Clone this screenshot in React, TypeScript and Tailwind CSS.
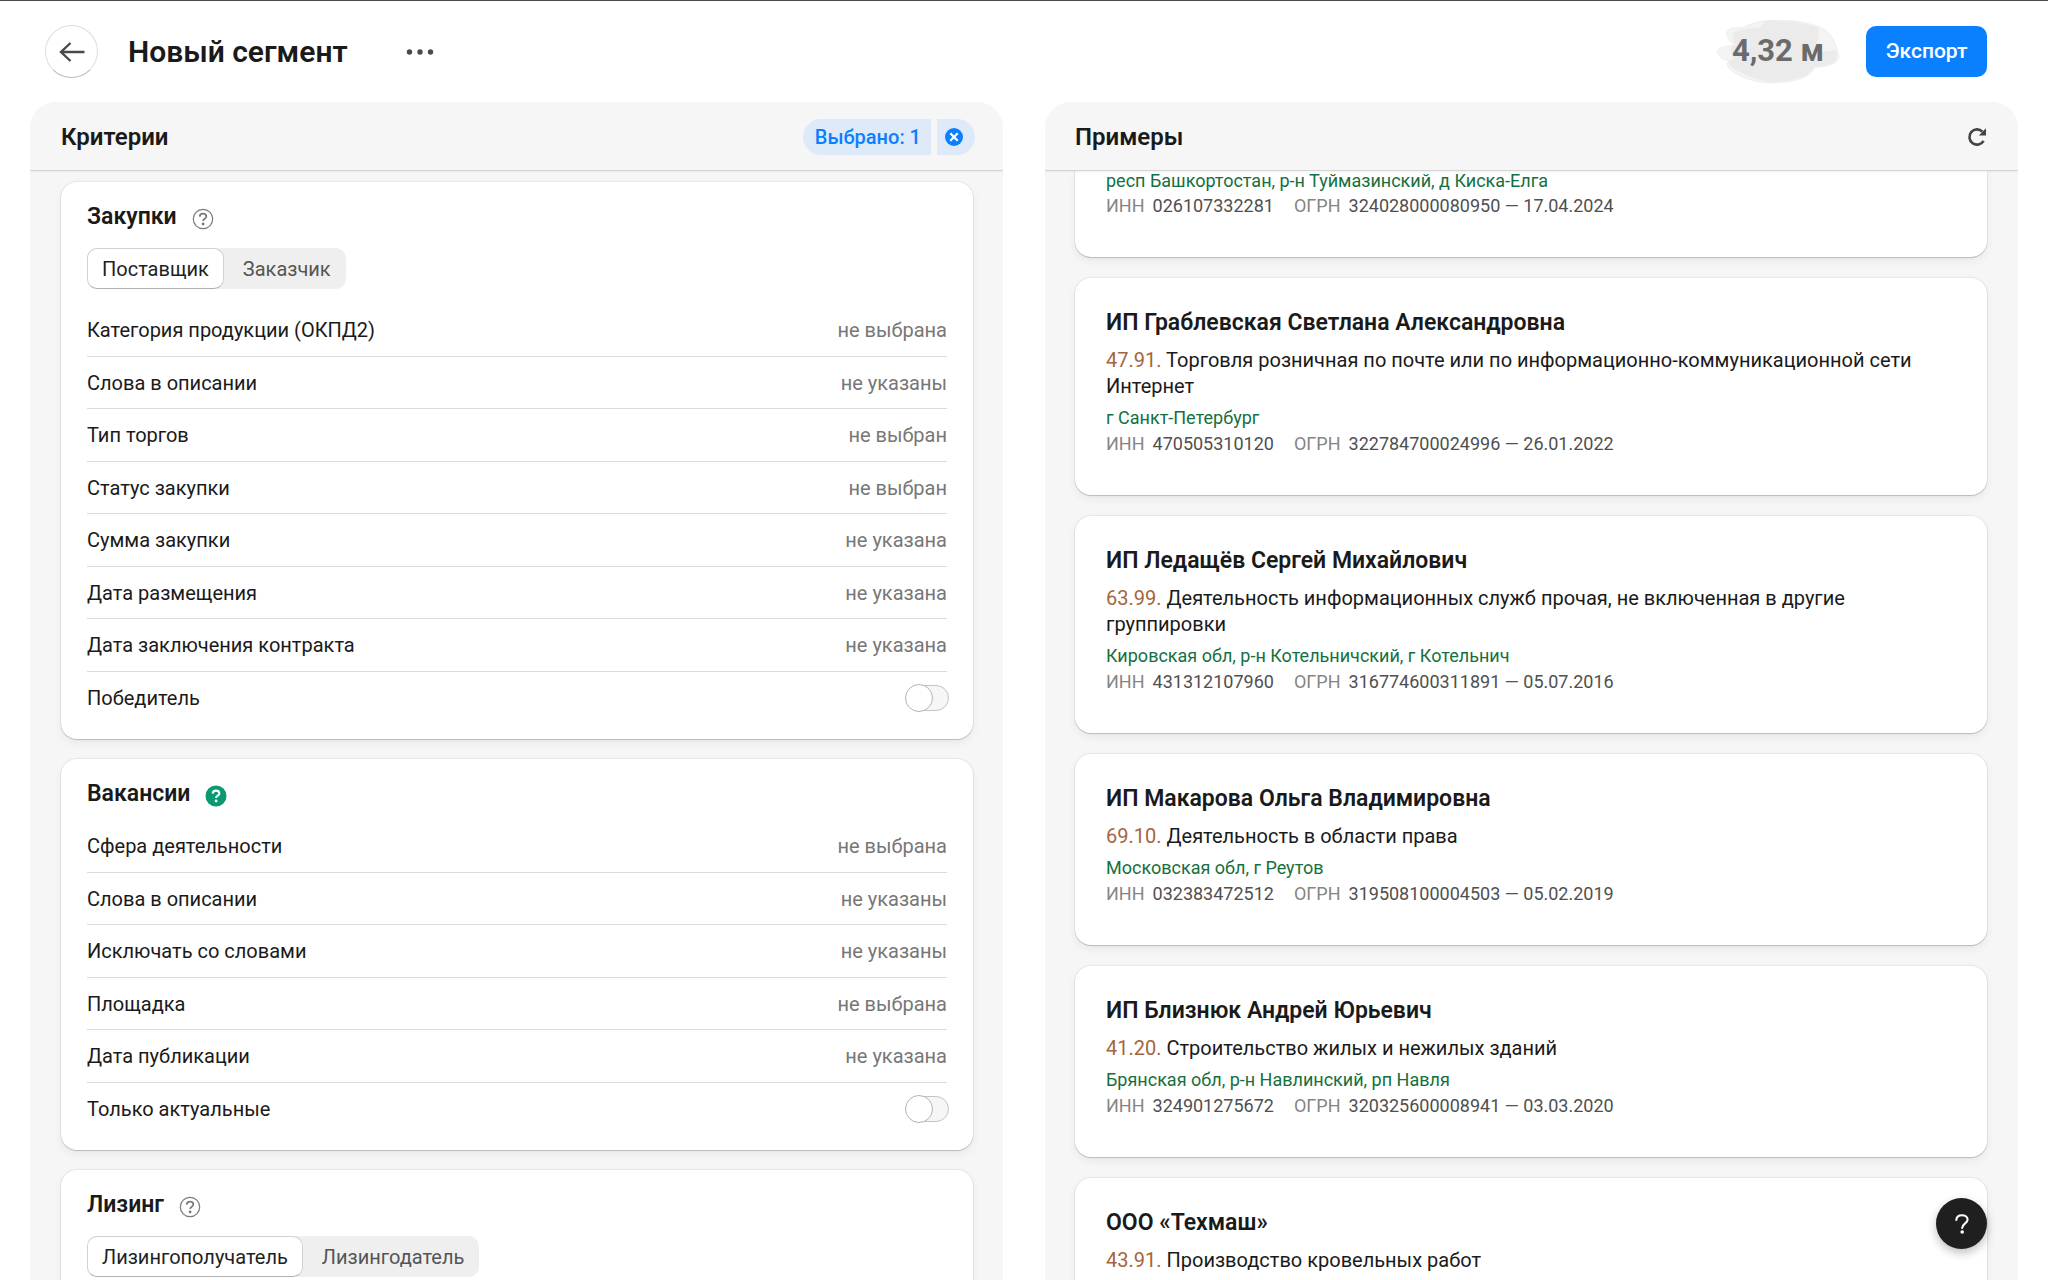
import React, { useState } from 'react';
import clsx from 'clsx';

type Criterion = {
  label: string;
  value?: string;
};

type CriteriaGroup = {
  id: string;
  title: string;
  tabs?: string[];
  accent?: boolean;
  items: Criterion[];
};

type Company = {
  name: string;
  code: string;
  activity: string;
  address: string;
  inn: string;
  ogrn: string;
  date: string;
};

const groups: CriteriaGroup[] = [
  {
    id: 'purchases',
    title: 'Закупки',
    tabs: ['Поставщик', 'Заказчик'],
    items: [
      { label: 'Категория продукции (ОКПД2)', value: 'не выбрана' },
      { label: 'Слова в описании', value: 'не указаны' },
      { label: 'Тип торгов', value: 'не выбран' },
      { label: 'Статус закупки', value: 'не выбран' },
      { label: 'Сумма закупки', value: 'не указана' },
      { label: 'Дата размещения', value: 'не указана' },
      { label: 'Дата заключения контракта', value: 'не указана' },
      { label: 'Победитель' },
    ],
  },
  {
    id: 'vacancies',
    title: 'Вакансии',
    accent: true,
    items: [
      { label: 'Сфера деятельности', value: 'не выбрана' },
      { label: 'Слова в описании', value: 'не указаны' },
      { label: 'Исключать со словами', value: 'не указаны' },
      { label: 'Площадка', value: 'не выбрана' },
      { label: 'Дата публикации', value: 'не указана' },
      { label: 'Только актуальные' },
    ],
  },
  {
    id: 'leasing',
    title: 'Лизинг',
    tabs: ['Лизингополучатель', 'Лизингодатель'],
    items: [],
  },
];

const companies: Company[] = [
  {
    name: 'ИП Граблевская Светлана Александровна',
    code: '47.91.',
    activity: 'Торговля розничная по почте или по информационно-коммуникационной сети Интернет',
    address: 'г Санкт-Петербург',
    inn: '470505310120',
    ogrn: '322784700024996',
    date: '26.01.2022',
  },
  {
    name: 'ИП Ледащёв Сергей Михайлович',
    code: '63.99.',
    activity: 'Деятельность информационных служб прочая, не включенная в другие группировки',
    address: 'Кировская обл, р-н Котельничский, г Котельнич',
    inn: '431312107960',
    ogrn: '316774600311891',
    date: '05.07.2016',
  },
  {
    name: 'ИП Макарова Ольга Владимировна',
    code: '69.10.',
    activity: 'Деятельность в области права',
    address: 'Московская обл, г Реутов',
    inn: '032383472512',
    ogrn: '319508100004503',
    date: '05.02.2019',
  },
  {
    name: 'ИП Близнюк Андрей Юрьевич',
    code: '41.20.',
    activity: 'Строительство жилых и нежилых зданий',
    address: 'Брянская обл, р-н Навлинский, рп Навля',
    inn: '324901275672',
    ogrn: '320325600008941',
    date: '03.03.2020',
  },
];

const cardShadow = 'shadow-[0_0_0_1px_rgba(0,0,0,0.05),0_1px_1px_rgba(0,0,0,0.16),0_4px_10px_rgba(0,0,0,0.06)]';

function HelpIcon({ filled }: { filled?: boolean }) {
  return (
    <svg className="w-[22px] h-[22px]" viewBox="0 0 22 22" fill="none">
      <circle cx="11" cy="11" r={filled ? 10.5 : 9.7} fill={filled ? '#0a9a73' : 'none'} stroke={filled ? 'none' : '#7b7b7b'} strokeWidth="1.2" />
      <path
        d="M7.7 8.6C7.8 6.7 9.2 5.6 11 5.6c1.9 0 3.3 1.1 3.3 2.8 0 2.3-3.2 2.3-3.2 4.6"
        stroke={filled ? '#fff' : '#7b7b7b'}
        strokeWidth={filled ? 2.1 : 1.8}
      />
      <circle cx="11.1" cy="16" r="1.4" fill={filled ? '#fff' : '#7b7b7b'} />
    </svg>
  );
}

function Tabs({ items, label }: { items: string[]; label: string }) {
  const [active, setActive] = useState(0);

  return (
    <div role="tablist" aria-label={label} className="inline-flex h-[41px] rounded-[10px] bg-[#efefef]">
      {items.map((item, i) => (
        <button
          key={item}
          role="tab"
          aria-selected={i === active}
          onClick={() => setActive(i)}
          className={clsx(
            'rounded-[10px] border px-3.5',
            i === active
              ? 'bg-white text-[#1f1f1f] border-[#d2d2d2] border-b-[#b0b0b0]'
              : 'text-[#555] border-transparent',
            i > 0 && 'pl-[18px]'
          )}
        >
          {item}
        </button>
      ))}
    </div>
  );
}

function CriterionRow({ item, last, id }: { item: Criterion; last: boolean; id: string }) {
  return (
    <li
      className={clsx(
        'flex items-center justify-between odd:h-[53px] even:h-[52px]',
        !last && 'border-b border-[#dcdcdc]'
      )}
    >
      {item.value ? (
        <button className="flex flex-1 items-center justify-between text-left">
          <span>{item.label}</span>
          <span className="text-[#777]">{item.value}</span>
        </button>
      ) : (
        <>
          <label htmlFor={id}>{item.label}</label>
          <span className="relative -mr-0.5 h-7 w-11">
            <input
              id={id}
              type="checkbox"
              role="switch"
              className="peer absolute top-px right-0 h-[26px] w-[43px] cursor-pointer appearance-none rounded-full border border-[#c4c4c4] bg-[#f6f6f6] checked:bg-[#0a80ff]"
            />
            <span className="pointer-events-none absolute top-0 left-0 h-7 w-7 rounded-full border border-[#b4b4b4] bg-white peer-checked:translate-x-4" />
          </span>
        </>
      )}
    </li>
  );
}

function GroupCard({ group }: { group: CriteriaGroup }) {
  return (
    <section className={clsx('flex flex-col rounded-2xl bg-white px-[26px] pt-[21px] pb-[15px]', cardShadow)}>
      <div className="flex h-7 items-center gap-[15px]">
        <h3 className="text-[23px] font-semibold">{group.title}</h3>
        <button aria-label={`Справка: ${group.title}`} className="mt-1">
          <HelpIcon filled={group.accent} />
        </button>
      </div>
      {group.tabs && (
        <div className="mt-[17px] mb-[3px] flex">
          <Tabs items={group.tabs} label={group.title} />
        </div>
      )}
      <ul className="mt-3">
        {group.items.map((item, i) => (
          <CriterionRow
            key={item.label}
            item={item}
            last={i === group.items.length - 1}
            id={`${group.id}-${i}`}
          />
        ))}
      </ul>
    </section>
  );
}

function Requisites({ inn, ogrn, date }: Pick<Company, 'inn' | 'ogrn' | 'date'>) {
  return (
    <div className="flex gap-5 text-[18px] leading-[25px] text-[#4f4f4f]">
      <span>
        <span className="mr-2 text-[#858585]">ИНН</span>
        {inn}
      </span>
      <span>
        <span className="mr-2 text-[#858585]">ОГРН</span>
        {ogrn} — {date}
      </span>
    </div>
  );
}

function CompanyCard({ company }: { company: Company }) {
  return (
    <article className={clsx('rounded-2xl bg-white px-[31px] pt-[29px] pb-[39px]', cardShadow)}>
      <h3 className="text-[23px] leading-8 font-semibold">{company.name}</h3>
      <p className="mt-2 max-w-[810px] leading-[26px]">
        <span className="text-[#a3663c]">{company.code}</span> {company.activity}
      </p>
      <p className="mt-1.5 text-[18px] leading-[26px] text-[#14703e]">{company.address}</p>
      <Requisites inn={company.inn} ogrn={company.ogrn} date={company.date} />
    </article>
  );
}

export default function App() {
  return (
    <div className="flex h-screen flex-col overflow-hidden border-t border-[#4a4a4c] bg-white font-[Roboto,sans-serif] text-[20px] text-[#1a1a1a]">
      <header className="flex h-[101px] shrink-0 items-center pr-[61px] pl-[45px]">
        <button
          aria-label="Назад"
          className="flex h-[53px] w-[53px] items-center justify-center rounded-full border border-[#dedede] border-b-[#bcbcbc] bg-white"
        >
          <svg className="h-5 w-[26px]" viewBox="0 0 26 20" fill="none" stroke="#4a4a4a" strokeWidth="2.4">
            <path d="M25.5 10H2M11.5 1L2 10l9.5 9" />
          </svg>
        </button>
        <h1 className="ml-[30px] text-[30px] font-semibold">Новый сегмент</h1>
        <button aria-label="Ещё" className="ml-[58px]">
          <svg className="h-[6px] w-[28px]" viewBox="0 0 28 6" fill="#4a4a4a">
            <circle cx="3.5" cy="3" r="2.7" />
            <circle cx="14" cy="3" r="2.7" />
            <circle cx="24.5" cy="3" r="2.7" />
          </svg>
        </button>

        <div className="relative ml-auto flex h-[64px] w-[124px] items-center justify-center">
          <svg className="absolute inset-0 h-full w-full" viewBox="0 0 124 64" fill="none">
            <path
              d="M11 15C10 9 15 7 27 8C34 3 45 1 57 0C75-1 92 3 104 7C114 11 120 21 123 37C122 44 112 46 98 48C94 58 78 62 58 63C40 63 20 57 12 47C9 42 14 41 14 41C6 40 2 36 1 31C4 27 12 26 18 25C13 20 12 18 11 15Z"
              fill="#f4f4f4"
              stroke="#e6e6e6"
              strokeWidth="0.6"
            />
            <path
              d="M18 12C26 9 38 8 45 7L49 1C68 0 84 2 103 8C103 16 101 24 98 33L120 30C124 42 118 44 98 47C92 58 78 60 58 62C42 61 24 54 14 46C11 42 14 40 18 38C16 34 14 30 15 27L20 25C17 20 15 16 18 12Z"
              fill="#ebebeb"
            />
          </svg>
          <span className="relative text-[31px] font-bold text-[#6b6b6b]">4,32 м</span>
        </div>
        <button className="ml-[26px] h-[51px] w-[121px] rounded-[10px] bg-[#0a80ff] text-[21px] font-medium text-white">
          Экспорт
        </button>
      </header>

      <main className="grid min-h-0 flex-1 grid-cols-2 gap-[42px] px-[30px]">
        <section className="flex min-h-0 flex-col overflow-hidden rounded-t-[26px] bg-[#f6f6f6]">
          <div className="z-10 flex h-[69px] shrink-0 items-center justify-between border-b border-[#d4d4d4] pt-0.5 pr-7 pl-[31px] shadow-[0_1px_2px_rgba(0,0,0,0.06)]">
            <h2 className="text-[24px] font-semibold">Критерии</h2>
            <div className="flex gap-1.5 text-[#0a80ff]">
              <button className="h-9 rounded-l-full bg-[#dee9fa] pr-2.5 pl-3 font-medium">
                Выбрано: 1
              </button>
              <button
                aria-label="Сбросить выбранное"
                className="flex h-9 w-[38px] items-center rounded-r-full bg-[#dee9fa] pl-2"
              >
                <svg className="h-[18px] w-[18px]" viewBox="0 0 18 18">
                  <circle cx="9" cy="9" r="9" fill="#0a80ff" />
                  <path d="M5.3 5.3l7.4 7.4M12.7 5.3l-7.4 7.4" stroke="#fff" strokeWidth="2.2" />
                </svg>
              </button>
            </div>
          </div>
          <div className="flex min-h-0 flex-1 flex-col gap-5 overflow-hidden pt-[11px] pr-[30px] pl-[31px] *:shrink-0">
            {groups.map((group) => (
              <GroupCard key={group.id} group={group} />
            ))}
          </div>
        </section>

        <section className="flex min-h-0 flex-col overflow-hidden rounded-t-[26px] bg-[#f6f6f6]">
          <div className="z-10 flex h-[69px] shrink-0 items-center justify-between border-b border-[#d4d4d4] pt-0.5 pr-[31px] pl-[30px] shadow-[0_1px_2px_rgba(0,0,0,0.06)]">
            <h2 className="text-[24px] font-semibold">Примеры</h2>
            <button aria-label="Обновить">
              <svg className="h-5 w-5" viewBox="0 0 20 20" fill="none">
                <path d="M16.6 13.8A7.6 7.6 0 1 1 15.4 4.6" stroke="#444" strokeWidth="2.6" />
                <path d="M19 1.2V8.4H11.8Z" fill="#444" />
              </svg>
            </button>
          </div>
          <div className="flex min-h-0 flex-1 flex-col gap-[21px] overflow-hidden pr-[31px] pl-[30px] *:shrink-0">
            {/* tail of the card scrolled under the header */}
            <article className={clsx('rounded-b-2xl bg-white px-[31px] pb-[39px]', cardShadow)}>
              <p className="mb-0.5 text-[18px] leading-5 text-[#14703e]">
                респ Башкортостан, р-н Туймазинский, д Киска-Елга
              </p>
              <Requisites inn="026107332281" ogrn="324028000080950" date="17.04.2024" />
            </article>
            {companies.map((company) => (
              <CompanyCard key={company.inn} company={company} />
            ))}
            <article className={clsx('h-[192px] rounded-2xl bg-white px-[31px] pt-[29px]', cardShadow)}>
              <h3 className="text-[23px] leading-8 font-semibold">ООО «Техмаш»</h3>
              <p className="mt-2 leading-[26px]">
                <span className="text-[#a3663c]">43.91.</span> Производство кровельных работ
              </p>
            </article>
          </div>
        </section>
      </main>

      <button
        aria-label="Помощь"
        className="fixed right-[61px] bottom-[31px] z-20 flex h-[51px] w-[51px] items-center justify-center rounded-full bg-[#1f1f1f] shadow-[0_4px_10px_rgba(0,0,0,0.25)]"
      >
        <svg className="h-5 w-3.5" viewBox="0 0 14 20" fill="none">
          <path d="M1.3 6C1.5 3 3.7 1.2 6.8 1.2S12.6 3 12.6 5.7C12.6 9.3 7.2 9.5 7.2 14" stroke="#fff" strokeWidth="2.1" strokeLinecap="round" />
          <circle cx="7.2" cy="18" r="1.8" fill="#fff" />
        </svg>
      </button>
    </div>
  );
}
